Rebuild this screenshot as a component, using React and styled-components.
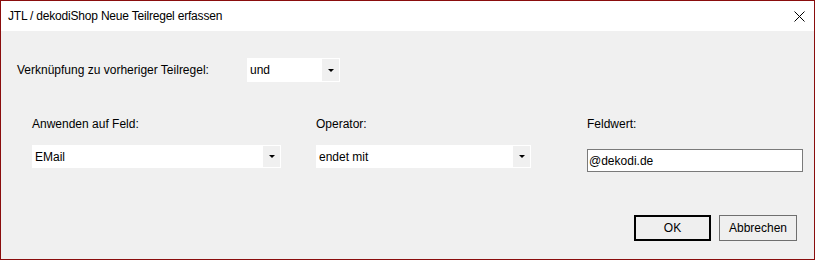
import React from "react";
import styled, { createGlobalStyle } from "styled-components";

const Global = createGlobalStyle`
  html, body { margin: 0; padding: 0; background: #ffffff; }
  body { font-family: "Liberation Sans", Arial, sans-serif; font-size: 12px; color: #000; }
`;

const Window = styled.div`
  width: 815px;
  height: 260px;
  box-sizing: border-box;
  border: 1px solid #8a0d0d;
  background: #f0f0f0;
  display: flex;
  flex-direction: column;
`;

const TitleBar = styled.div`
  height: 30px;
  background: #ffffff;
  display: flex;
  align-items: center;
  justify-content: space-between;
  padding-left: 7px;
  padding-right: 9px;
`;

const Title = styled.span`
  font-size: 12px;
  line-height: 16px;
  letter-spacing: -0.2px;
`;

const Close = styled.div`
  width: 11px;
  height: 11px;
  display: flex;
`;

const Body = styled.div`
  flex: 1;
  display: flex;
  flex-direction: column;
`;

const LinkRow = styled.div`
  display: flex;
  align-items: center;
  margin-top: 27px;
  padding-left: 16px;
`;

const LinkLabel = styled.span`
  width: 230px;
  line-height: 16px;
`;

const Fields = styled.div`
  display: grid;
  grid-template-columns: 284px 271px 216px;
  padding-left: 31px;
  margin-top: 34px;
`;

const Field = styled.div`
  display: flex;
  flex-direction: column;
`;

const Label = styled.span`
  line-height: 16px;
  margin-bottom: ${(p) => p.$gap}px;
`;

const Combo = styled.div`
  width: ${(p) => p.$w}px;
  height: ${(p) => p.$h}px;
  box-sizing: border-box;
  background: #ffffff;
  border: 1px solid #ffffff;
  display: flex;
  align-items: center;
`;

const ComboText = styled.span`
  flex: 1;
  padding-left: 2px;
  line-height: 16px;
`;

const ComboButton = styled.div`
  width: 17px;
  align-self: stretch;
  background: #f0f0f0;
  display: flex;
  align-items: center;
  justify-content: center;
`;

const Arrow = styled.div`
  width: 0;
  height: 0;
  border-left: 3px solid transparent;
  border-right: 3px solid transparent;
  border-top: 3px solid #000;
`;

const TextBox = styled.div`
  width: 216px;
  height: 23px;
  box-sizing: border-box;
  background: #ffffff;
  border: 1px solid #7a7a7a;
  display: flex;
  align-items: center;
  padding-left: 1px;
`;

const Footer = styled.div`
  margin-top: auto;
  margin-bottom: 18px;
  display: flex;
  justify-content: flex-end;
  gap: 8px;
  padding-right: 17px;
`;

const Button = styled.button`
  width: ${(p) => p.$w}px;
  height: 26px;
  box-sizing: border-box;
  background: #efefef;
  border: ${(p) => (p.$default ? "2px solid #000" : "1px solid #6f6f6f")};
  font-family: inherit;
  font-size: 12px;
  color: #000;
  padding: 0;
`;

function Dropdown({ value, w, h }) {
  return (
    <Combo $w={w} $h={h}>
      <ComboText>{value}</ComboText>
      <ComboButton>
        <Arrow />
      </ComboButton>
    </Combo>
  );
}

export default function App() {
  return (
    <>
      <Global />
      <Window>
        <TitleBar>
          <Title>JTL / dekodiShop Neue Teilregel erfassen</Title>
          <Close>
            <svg width="11" height="11" viewBox="0 0 11 11">
              <path d="M0.5 0.5L10.5 10.5M10.5 0.5L0.5 10.5" stroke="#000" strokeWidth="1" />
            </svg>
          </Close>
        </TitleBar>
        <Body>
          <LinkRow>
            <LinkLabel>Verknüpfung zu vorheriger Teilregel:</LinkLabel>
            <Dropdown value="und" w={93} h={24} />
          </LinkRow>
          <Fields>
            <Field>
              <Label $gap={13}>Anwenden auf Feld:</Label>
              <Dropdown value="EMail" w={249} h={23} />
            </Field>
            <Field>
              <Label $gap={13}>Operator:</Label>
              <Dropdown value="endet mit" w={215} h={23} />
            </Field>
            <Field>
              <Label $gap={17}>Feldwert:</Label>
              <TextBox>@dekodi.de</TextBox>
            </Field>
          </Fields>
          <Footer>
            <Button $w={77} $default>
              OK
            </Button>
            <Button $w={78}>Abbrechen</Button>
          </Footer>
        </Body>
      </Window>
    </>
  );
}
